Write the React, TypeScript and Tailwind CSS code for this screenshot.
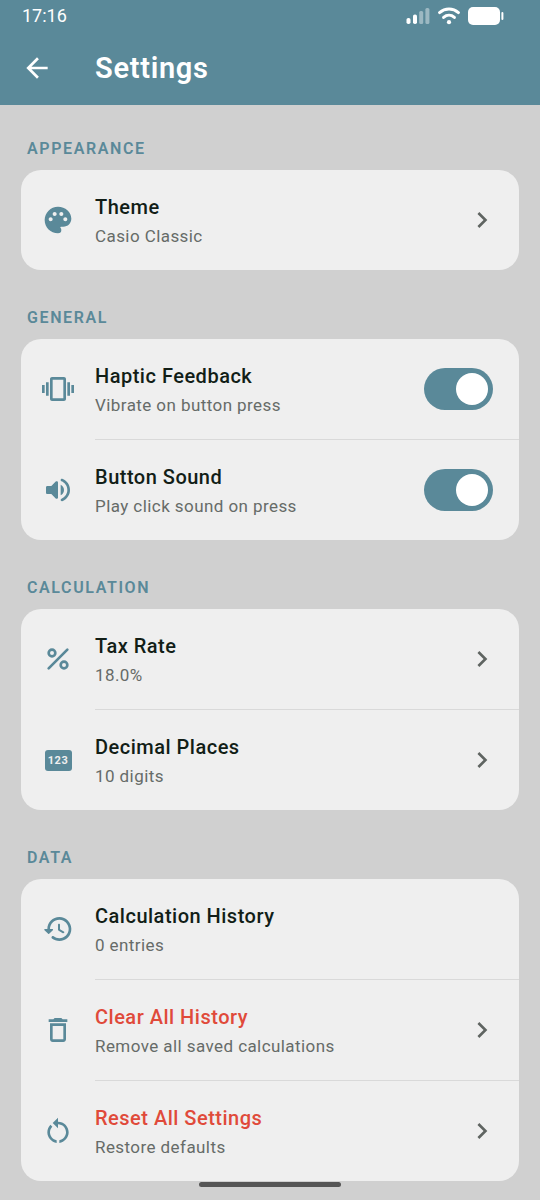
import { useId, useState, type ReactNode } from "react";
import {
  MdArrowBack,
  MdChevronRight,
  MdDeleteOutline,
  MdOutlineVibration,
  MdPalette,
  MdRestartAlt,
} from "react-icons/md";

function StatusBar() {
  return (
    <div className="flex h-[31px] items-center justify-between pr-9 pl-[22px]">
      <span className="text-lg leading-6">17:16</span>
      <div className="flex items-center gap-2">
        <svg className="h-4 w-6" viewBox="0 0 24 16" fill="currentColor" aria-hidden="true">
          <rect x="0.5" y="10" width="4" height="6" rx="1.8" />
          <rect x="7" y="6.5" width="4" height="9.5" rx="1.8" />
          <rect x="13.2" y="3" width="4" height="13" rx="1.5" opacity="0.4" />
          <rect x="19.4" y="0" width="4" height="16" rx="1.5" opacity="0.4" />
        </svg>
        <svg
          className="h-[18px] w-[22px]"
          viewBox="0 0 22 18"
          fill="none"
          stroke="currentColor"
          strokeWidth="3"
          strokeLinecap="round"
          aria-hidden="true"
        >
          <path d="M1.6 5.6C7 .9 15 .9 20.4 5.6" />
          <path d="M5.6 10.4C8.8 7.6 13.2 7.6 16.4 10.4" />
          <circle cx="11" cy="15.2" r="2.1" fill="currentColor" stroke="none" />
        </svg>
        <svg className="h-[18px] w-9" viewBox="0 0 36 18" fill="currentColor" aria-hidden="true">
          <rect x="0" y="0" width="32" height="18" rx="5" />
          <rect x="33.4" y="5" width="2" height="8" rx="1" />
        </svg>
      </div>
    </div>
  );
}

function VolumeIcon() {
  return (
    <svg className="size-8" viewBox="0 0 24 24" fill="currentColor" aria-hidden="true">
      <path d="M3 10v4c0 .55.45 1 1 1h3l3.29 3.29c.63.63 1.71.18 1.71-.71V6.41c0-.89-1.08-1.34-1.71-.71L7 9H4c-.55 0-1 .45-1 1zm13.5 2A4.5 4.5 0 0 0 14 7.97v8.05c1.48-.73 2.5-2.25 2.5-4.02zM14 4.45v.2c0 .38.25.71.6.85C17.18 6.53 19 9.06 19 12s-1.82 5.47-4.4 6.5c-.36.14-.6.47-.6.85v.2c0 .63.63 1.07 1.21.85C18.6 19.11 21 15.84 21 12s-2.4-7.11-5.79-8.4c-.58-.23-1.21.22-1.21.85z" />
    </svg>
  );
}

function HistoryIcon() {
  return (
    <svg className="size-8" viewBox="0 0 24 24" fill="currentColor" aria-hidden="true">
      <path d="M13.26 3C8.17 2.86 4 6.95 4 12H2.21c-.45 0-.67.54-.35.85l2.79 2.8c.2.2.51.2.71 0l2.79-2.8c.31-.31.09-.85-.36-.85H6c0-3.9 3.18-7.05 7.1-7 3.72.05 6.85 3.18 6.9 6.9.05 3.91-3.1 7.1-7 7.1-1.61 0-3.1-.55-4.28-1.48-.4-.31-.96-.28-1.32.08-.42.42-.39 1.13.08 1.49C9 20.29 10.91 21 13 21c5.05 0 9.14-4.17 9-9.26-.13-4.69-4.05-8.61-8.74-8.74zm-.51 5c-.41 0-.75.34-.75.75v3.68c0 .35.19.68.49.86l3.12 1.85c.36.21.82.09 1.03-.26.21-.36.09-.82-.26-1.03l-2.88-1.71v-3.4c0-.4-.34-.74-.75-.74z" />
    </svg>
  );
}

function PercentIcon() {
  return (
    <svg
      className="size-8"
      viewBox="0 0 24 24"
      fill="none"
      stroke="currentColor"
      strokeWidth="2"
      strokeLinecap="round"
      aria-hidden="true"
    >
      <circle cx="7.5" cy="7.5" r="2.5" />
      <circle cx="16.5" cy="16.5" r="2.5" />
      <path d="M5 19 19 5" />
    </svg>
  );
}

function DigitsIcon() {
  return (
    <span className="flex h-[21px] w-[27px] items-center justify-center rounded-[3px] bg-[#5a8999] text-[11px] leading-none font-bold tracking-wider text-[#efefef]">
      123
    </span>
  );
}

function Section({ title, children }: { title: string; children: ReactNode }) {
  return (
    <section>
      <h2 className="mb-2 px-1.5 text-base leading-[26px] font-semibold tracking-widest text-[#5a8999] uppercase">
        {title}
      </h2>
      <div className="overflow-hidden rounded-[20px] bg-[#efefef]">{children}</div>
    </section>
  );
}

type RowProps = {
  icon: ReactNode;
  title: string;
  detail: string;
  danger?: boolean;
};

function RowIcon({ children }: { children: ReactNode }) {
  return (
    <span className="flex size-8 shrink-0 items-center justify-center text-[#5a8999]">{children}</span>
  );
}

function RowText({ title, detail, danger }: Omit<RowProps, "icon">) {
  return (
    <span className="flex flex-1 flex-col gap-1">
      <span
        className={
          danger
            ? "text-xl leading-7 font-medium tracking-wide text-[#e04a3a]"
            : "text-xl leading-7 font-medium tracking-wide text-[#121e17]"
        }
      >
        {title}
      </span>
      <span className="text-[17px] leading-[22px] tracking-wide text-[#666b68]">{detail}</span>
    </span>
  );
}

function Divider() {
  return <div className="ml-[74px] h-px bg-[#d9d9d9]" />;
}

function LinkRow({ icon, ...text }: RowProps) {
  return (
    <button type="button" className="flex min-h-[100px] w-full items-center gap-[21px] px-[21px] text-left">
      <RowIcon>{icon}</RowIcon>
      <RowText {...text} />
      <MdChevronRight className="size-8 shrink-0 text-[#5f6461]" />
    </button>
  );
}

function InfoRow({ icon, ...text }: RowProps) {
  return (
    <div className="flex min-h-[100px] items-center gap-[21px] px-[21px]">
      <RowIcon>{icon}</RowIcon>
      <RowText {...text} />
    </div>
  );
}

function SwitchRow({ icon, ...text }: RowProps) {
  const id = useId();
  const [on, setOn] = useState(true);
  return (
    <label htmlFor={id} className="flex min-h-[100px] items-center gap-[21px] pr-[26px] pl-[21px]">
      <RowIcon>{icon}</RowIcon>
      <RowText {...text} />
      <input
        id={id}
        type="checkbox"
        checked={on}
        onChange={(event) => setOn(event.target.checked)}
        className="flex h-[42px] w-[69px] shrink-0 appearance-none items-center rounded-full bg-[#a9a9a9] px-[5px] before:size-8 before:rounded-full before:bg-white checked:justify-end checked:bg-[#5a8999]"
      />
    </label>
  );
}

export default function App() {
  return (
    <div className="min-h-screen bg-[#d0d0d0] font-[Roboto,sans-serif]">
      <header className="bg-[#5a8999] text-white">
        <StatusBar />
        <div className="flex h-[74px] items-center gap-[42px] px-[21px]">
          <button type="button" aria-label="Back" className="flex size-8 items-center justify-center">
            <MdArrowBack className="size-8" />
          </button>
          <h1 className="text-[29px] leading-9 font-semibold tracking-wide">Settings</h1>
        </div>
      </header>

      <main className="flex flex-col gap-[35px] px-[21px] pt-[31px] pb-[18px]">
        <Section title="Appearance">
          <LinkRow icon={<MdPalette className="size-8" />} title="Theme" detail="Casio Classic" />
        </Section>

        <Section title="General">
          <SwitchRow
            icon={<MdOutlineVibration className="size-8" />}
            title="Haptic Feedback"
            detail="Vibrate on button press"
          />
          <Divider />
          <SwitchRow icon={<VolumeIcon />} title="Button Sound" detail="Play click sound on press" />
        </Section>

        <Section title="Calculation">
          <LinkRow icon={<PercentIcon />} title="Tax Rate" detail="18.0%" />
          <Divider />
          <LinkRow icon={<DigitsIcon />} title="Decimal Places" detail="10 digits" />
        </Section>

        <Section title="Data">
          <InfoRow icon={<HistoryIcon />} title="Calculation History" detail="0 entries" />
          <Divider />
          <LinkRow
            icon={<MdDeleteOutline className="size-8" />}
            title="Clear All History"
            detail="Remove all saved calculations"
            danger
          />
          <Divider />
          <LinkRow
            icon={<MdRestartAlt className="size-8" />}
            title="Reset All Settings"
            detail="Restore defaults"
            danger
          />
        </Section>
      </main>

      <div className="fixed inset-x-0 bottom-[13px] mx-auto h-[5px] w-[142px] rounded-full bg-[#555555]" />
    </div>
  );
}
